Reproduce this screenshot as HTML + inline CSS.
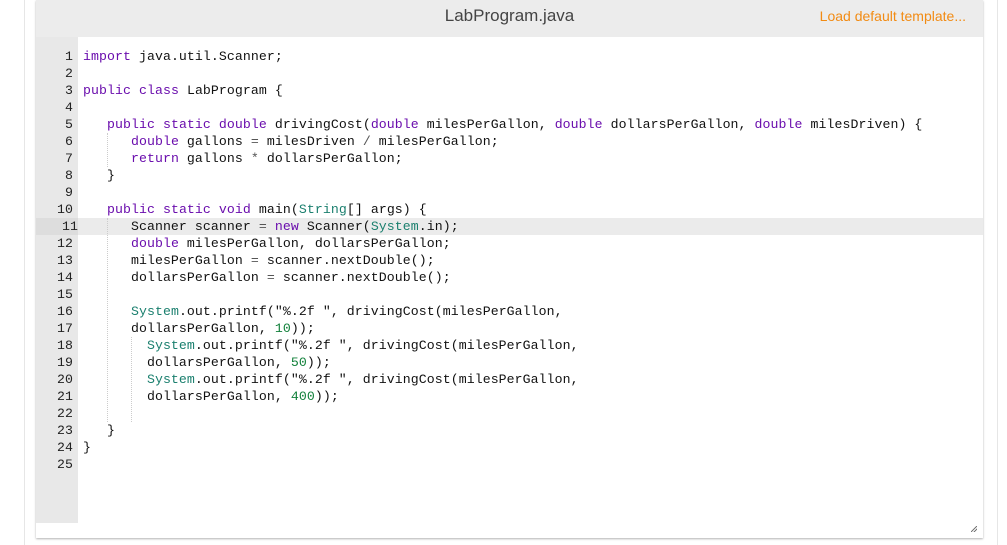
<!DOCTYPE html>
<html><head><meta charset="utf-8"><style>
body{margin:0;width:1007px;height:545px;background:#fff;position:relative;overflow:hidden;font-family:"Liberation Sans",sans-serif}
.outl{position:absolute;left:24px;top:0;width:1px;height:545px;background:#e6e6e6}
.outr{position:absolute;left:997px;top:0;width:1px;height:545px;background:#e6e6e6}
.panel{position:absolute;left:36px;top:0;width:947px;height:538px;background:#fff;box-shadow:0 1px 2px rgba(0,0,0,.3)}
.hdr{position:absolute;left:0;top:0;width:947px;height:37px;background:#ececec}
.title{position:absolute;left:0;width:947px;top:6px;text-align:center;font-size:17px;color:#444}
.load{position:absolute;right:17px;top:8px;font-size:14px;color:#f28b13}
.gut{position:absolute;left:0;top:37px;width:42px;height:486px;background:#e8e8e8}
.code{position:absolute;left:0;top:48px;width:947px;font-family:"Liberation Mono",monospace;font-size:13.2px;letter-spacing:0.08px;line-height:17px;color:#111}
.l{height:17px;position:relative;white-space:pre}
.n{position:absolute;left:0;width:37px;text-align:right;color:#222}
.t{position:absolute;left:47px}
.hl{background:#ebebeb}
.hl .n{background:#ddd;left:0;width:42px;padding-right:0}
.k{color:#6a0dad}.y{color:#1a7f6e}.d{color:#11803a}.o{color:#555}
.g{position:absolute;width:0;border-left:1px dotted #ccc}
.rs{position:absolute;right:6px;bottom:6px;width:6px;height:6px;background:linear-gradient(135deg,transparent 45%,#777 45%,#777 55%,transparent 55%,transparent 70%,#777 70%,#777 80%,transparent 80%)}
</style></head><body>
<div class="outl"></div><div class="outr"></div>
<div class="panel">
<div class="hdr"><div class="title">LabProgram.java</div><div class="load">Load default template...</div></div>
<div class="gut"></div>
<div class="code">
<div class="l"><span class="n">1</span><span class="t"><span class="k">import</span> java.util.Scanner;</span></div>
<div class="l"><span class="n">2</span></div>
<div class="l"><span class="n">3</span><span class="t"><span class="k">public</span> <span class="k">class</span> LabProgram {</span></div>
<div class="l"><span class="n">4</span></div>
<div class="l"><span class="n">5</span><span class="t">   <span class="k">public</span> <span class="k">static</span> <span class="k">double</span> drivingCost(<span class="k">double</span> milesPerGallon, <span class="k">double</span> dollarsPerGallon, <span class="k">double</span> milesDriven) {</span></div>
<div class="l"><span class="n">6</span><span class="t">      <span class="k">double</span> gallons <span class="o">=</span> milesDriven <span class="o">/</span> milesPerGallon;</span></div>
<div class="l"><span class="n">7</span><span class="t">      <span class="k">return</span> gallons <span class="o">*</span> dollarsPerGallon;</span></div>
<div class="l"><span class="n">8</span><span class="t">   }</span></div>
<div class="l"><span class="n">9</span></div>
<div class="l"><span class="n">10</span><span class="t">   <span class="k">public</span> <span class="k">static</span> <span class="k">void</span> main(<span class="y">String</span>[] args) {</span></div>
<div class="l hl"><span class="n">11</span><span class="t">      Scanner scanner <span class="o">=</span> <span class="k">new</span> Scanner(<span class="y">System</span>.in);</span></div>
<div class="l"><span class="n">12</span><span class="t">      <span class="k">double</span> milesPerGallon, dollarsPerGallon;</span></div>
<div class="l"><span class="n">13</span><span class="t">      milesPerGallon <span class="o">=</span> scanner.nextDouble();</span></div>
<div class="l"><span class="n">14</span><span class="t">      dollarsPerGallon <span class="o">=</span> scanner.nextDouble();</span></div>
<div class="l"><span class="n">15</span></div>
<div class="l"><span class="n">16</span><span class="t">      <span class="y">System</span>.out.printf("%.2f ", drivingCost(milesPerGallon,</span></div>
<div class="l"><span class="n">17</span><span class="t">      dollarsPerGallon, <span class="d">10</span>));</span></div>
<div class="l"><span class="n">18</span><span class="t">        <span class="y">System</span>.out.printf("%.2f ", drivingCost(milesPerGallon,</span></div>
<div class="l"><span class="n">19</span><span class="t">        dollarsPerGallon, <span class="d">50</span>));</span></div>
<div class="l"><span class="n">20</span><span class="t">        <span class="y">System</span>.out.printf("%.2f ", drivingCost(milesPerGallon,</span></div>
<div class="l"><span class="n">21</span><span class="t">        dollarsPerGallon, <span class="d">400</span>));</span></div>
<div class="l"><span class="n">22</span></div>
<div class="l"><span class="n">23</span><span class="t">   }</span></div>
<div class="l"><span class="n">24</span><span class="t">}</span></div>
<div class="l"><span class="n">25</span></div>
</div>
<div class="g" style="left:71px;top:133px;height:34px"></div>
<div class="g" style="left:71px;top:218px;height:204px"></div>
<div class="g" style="left:95px;top:337px;height:85px"></div>
<div class="rs"></div>
</div>
</body></html>
